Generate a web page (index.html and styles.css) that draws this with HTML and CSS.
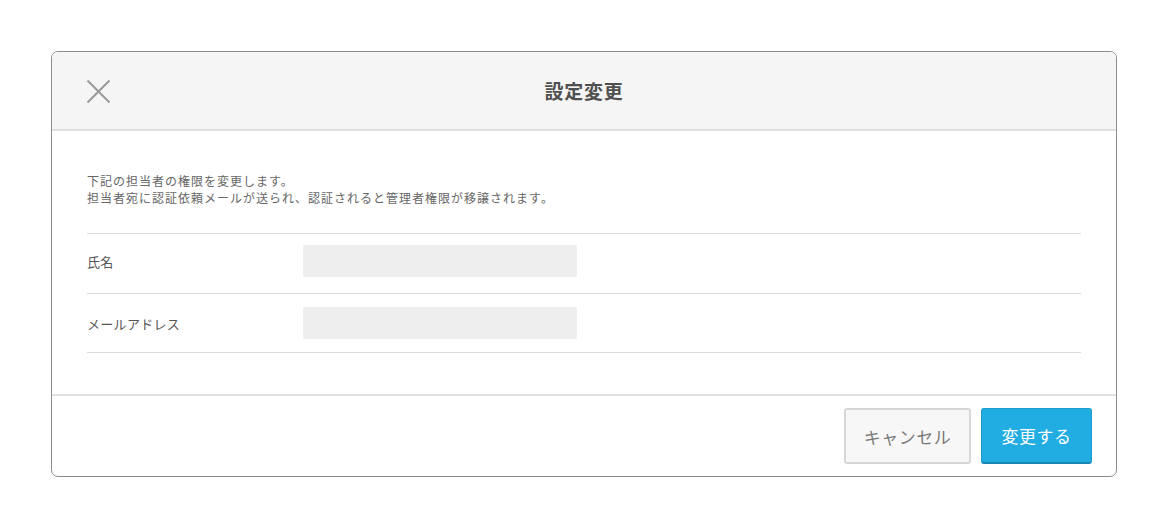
FILE: index.html
```html
<!DOCTYPE html>
<html lang="ja">
<head>
<meta charset="utf-8">
<title>設定変更</title>
<link rel="stylesheet" href="styles.css">
</head>
<body>
<div class="modal">
  <div class="modal-header">
    <button class="close-btn" aria-label="閉じる">
      <svg width="25" height="25" viewBox="0 0 25 25"><path d="M1.5 1.5 L23.5 23.5 M23.5 1.5 L1.5 23.5" stroke="#999" stroke-width="2" fill="none"/></svg>
    </button>
    <h1 class="modal-title">設定変更</h1>
    <div></div>
  </div>
  <div class="modal-body">
    <p class="desc">下記の担当者の権限を変更します。<br>担当者宛に認証依頼メールが送られ、認証されると管理者権限が移譲されます。</p>
    <div class="form-table">
      <div class="form-row">
        <div class="form-label">氏名</div>
        <div class="form-value"></div>
      </div>
      <div class="form-row">
        <div class="form-label">メールアドレス</div>
        <div class="form-value"></div>
      </div>
    </div>
  </div>
  <div class="modal-footer">
    <button class="btn btn-cancel">キャンセル</button>
    <button class="btn btn-primary">変更する</button>
  </div>
</div>
</body>
</html>
```
FILE: styles.css
```css
html, body {
  margin: 0;
  padding: 0;
  background: #fff;
  font-family: "Noto Sans CJK JP", "Noto Sans", sans-serif;
}
body {
  padding: 51px 0 0 51px;
}
.modal {
  width: 1064px;
  border: 1px solid #8c8c8c;
  border-radius: 7px;
  background: #fff;
  overflow: hidden;
}
.modal-header {
  height: 77px;
  background: #f5f5f5;
  border-bottom: 2px solid #e0e0e0;
  display: grid;
  grid-template-columns: 1fr auto 1fr;
  align-items: center;
}
.close-btn {
  justify-self: start;
  margin-left: 34px;
  margin-top: 1px;
  padding: 0;
  border: 0;
  background: none;
  width: 25px;
  height: 25px;
  display: flex;
}
.modal-title {
  margin: 0;
  font-size: 19px;
  font-weight: bold;
  color: #505050;
  letter-spacing: 0.8px;
}
.modal-body {
  padding: 41px 35px 41px 35px;
}
.desc {
  margin: 0 0 27px 0;
  font-size: 12px;
  line-height: 17px;
  letter-spacing: 1px;
  color: #666;
}
.form-table {
  border-top: 1px solid #dcdcdc;
}
.form-row {
  display: flex;
  align-items: center;
  padding: 11px 0 16px 0;
  border-bottom: 1px solid #dcdcdc;
}
.form-row + .form-row {
  padding-top: 13px;
  padding-bottom: 13px;
}
.form-label {
  width: 216px;
  font-size: 13px;
  color: #555;
  letter-spacing: 0.3px;
}
.form-value {
  width: 274px;
  height: 32px;
  background: #eeeeee;
}
.modal-footer {
  border-top: 2px solid #e0e0e0;
  display: flex;
  justify-content: flex-end;
  gap: 10px;
  padding: 12px 24px 12px 0;
}
.btn {
  height: 56px;
  box-sizing: border-box;
  border-radius: 3px;
  font-family: "Noto Sans CJK JP", "Noto Sans", sans-serif;
  font-size: 17px;
  padding: 0;
  cursor: pointer;
}
.btn-cancel {
  width: 127px;
  background: #f7f7f7;
  border: 2px solid #d6d6d6;
  color: #7a7a7a;
  letter-spacing: 0.5px;
}
.btn-primary {
  width: 111px;
  background: #21ade2;
  border: 1px solid #1d9bcb;
  border-bottom: 2px solid #1a86b0;
  color: #fff;
  letter-spacing: 0.5px;
}
```
